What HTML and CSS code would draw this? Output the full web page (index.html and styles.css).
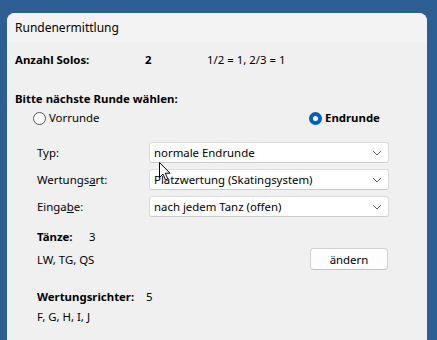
FILE: index.html
```html
<!DOCTYPE html>
<html lang="de">
<head>
<meta charset="utf-8">
<title>Rundenermittlung</title>
<link rel="stylesheet" href="styles.css">
</head>
<body>
<div class="window">
  <div class="titlebar">Rundenermittlung</div>
  <div class="content">
    <div class="solos">
      <b class="solos-label">Anzahl Solos:</b>
      <b class="solos-value">2</b>
      <span>1/2 = 1, 2/3 = 1</span>
    </div>
    <div class="prompt">Bitte nächste Runde wählen:</div>
    <div class="radios">
      <label class="radio first"><span class="circle"></span>Vorrunde</label>
      <label class="radio checked"><span class="circle"></span>Endrunde</label>
    </div>
    <div class="fields">
      <span class="field-label">Typ:</span>
      <div class="combo"><span>normale Endrunde</span><svg class="chev" width="10" height="6" viewBox="0 0 10 6"><path d="M1 1 L5 5 L9 1" fill="none" stroke="#5f5f5f" stroke-width="1"/></svg></div>
      <span class="field-label">Wertungs<u>a</u>rt:</span>
      <div class="combo"><span>Platzwertung (Skatingsystem)</span><svg class="chev" width="10" height="6" viewBox="0 0 10 6"><path d="M1 1 L5 5 L9 1" fill="none" stroke="#5f5f5f" stroke-width="1"/></svg></div>
      <span class="field-label">Einga<u>b</u>e:</span>
      <div class="combo"><span>nach jedem Tanz (offen)</span><svg class="chev" width="10" height="6" viewBox="0 0 10 6"><path d="M1 1 L5 5 L9 1" fill="none" stroke="#5f5f5f" stroke-width="1"/></svg></div>
    </div>
    <div class="section">
      <div class="line"><b class="key short">Tänze:</b><span>3</span></div>
      <div class="row">
        <span>LW, TG, QS</span>
        <button class="btn" type="button">ändern</button>
      </div>
      <div class="line judges"><b class="key long">Wertungsrichter:</b><span>5</span></div>
      <div class="line sub">F, G, H, I, J</div>
    </div>
  </div>
  <svg class="cursor" width="14" height="20" viewBox="0 0 14 20"><path d="M0.5 0.5 L0.5 15.5 L4 12 L6.5 18 L8.8 17 L6.3 11.2 L11 11.2 Z" fill="#ffffff" stroke="#000000" stroke-width="1" stroke-linejoin="miter"/></svg>
</div>
</body>
</html>
```
FILE: styles.css
```css
html, body {
  margin: 0;
  padding: 0;
}
body {
  background: #2d5f94;
  font-family: "Segoe UI", "Noto Sans", "Open Sans", sans-serif;
  font-size: 11.4px;
  color: #000;
  height: 340px;
  overflow: hidden;
}
.window {
  position: relative;
  margin: 13px 0 0 7px;
  width: 420px;
  height: 340px;
  background: #f0f0f0;
  border-radius: 8px 8px 0 0;
}
.titlebar {
  height: 30px;
  line-height: 30px;
  padding-left: 8px;
  background: #f3f3f3;
  border-radius: 8px 8px 0 0;
  font-size: 12px;
}
.content {
  padding: 0 8px;
}
.solos {
  display: flex;
  margin-top: 9px;
  height: 16px;
  line-height: 16px;
}
.solos-label { width: 130px; }
.solos-value { width: 62px; }
.prompt {
  margin-top: 23px;
  height: 16px;
  line-height: 16px;
  font-weight: bold;
}
.radios {
  display: flex;
  margin-top: 3px;
  padding-left: 18px;
  height: 16px;
  line-height: 16px;
}
.radio {
  display: flex;
  align-items: center;
  gap: 3px;
}
.radio.first { width: 276px; }
.radio.checked { font-weight: bold; }
.circle {
  box-sizing: border-box;
  width: 13px;
  height: 13px;
  border-radius: 50%;
  border: 1px solid #555;
  background: #fff;
}
.checked .circle {
  border: 4px solid #0060c0;
  background: #fff;
}
.fields {
  display: grid;
  grid-template-columns: 112px 240px;
  grid-auto-rows: 21px;
  row-gap: 6px;
  margin-top: 16px;
  padding-left: 22px;
  align-items: center;
}
.combo {
  box-sizing: border-box;
  height: 21px;
  display: flex;
  align-items: center;
  justify-content: space-between;
  padding: 0 6px 0 4px;
  background: #fff;
  border: 1px solid #dcdcdc;
  border-bottom-color: #cdcdcd;
  border-radius: 3px;
}
.chev { display: block; }
.section {
  margin-top: 12px;
  padding-left: 22px;
  width: 352px;
}
.line {
  display: flex;
  height: 16px;
  line-height: 16px;
}
.key.short { width: 52px; }
.key.long { width: 109px; }
.row {
  display: flex;
  align-items: center;
  justify-content: space-between;
  margin-top: 3px;
  height: 22px;
  padding-right: 1px;
}
.btn {
  box-sizing: border-box;
  width: 78px;
  height: 22px;
  font: inherit;
  color: #000;
  background: #fdfdfd;
  border: 1px solid #d3d3d3;
  border-bottom-color: #c4c4c4;
  border-radius: 4px;
  padding: 0;
}
.judges { margin-top: 19px; }
.sub { margin-top: 4px; }
.cursor {
  position: absolute;
  left: 152px;
  top: 149px;
}
```
